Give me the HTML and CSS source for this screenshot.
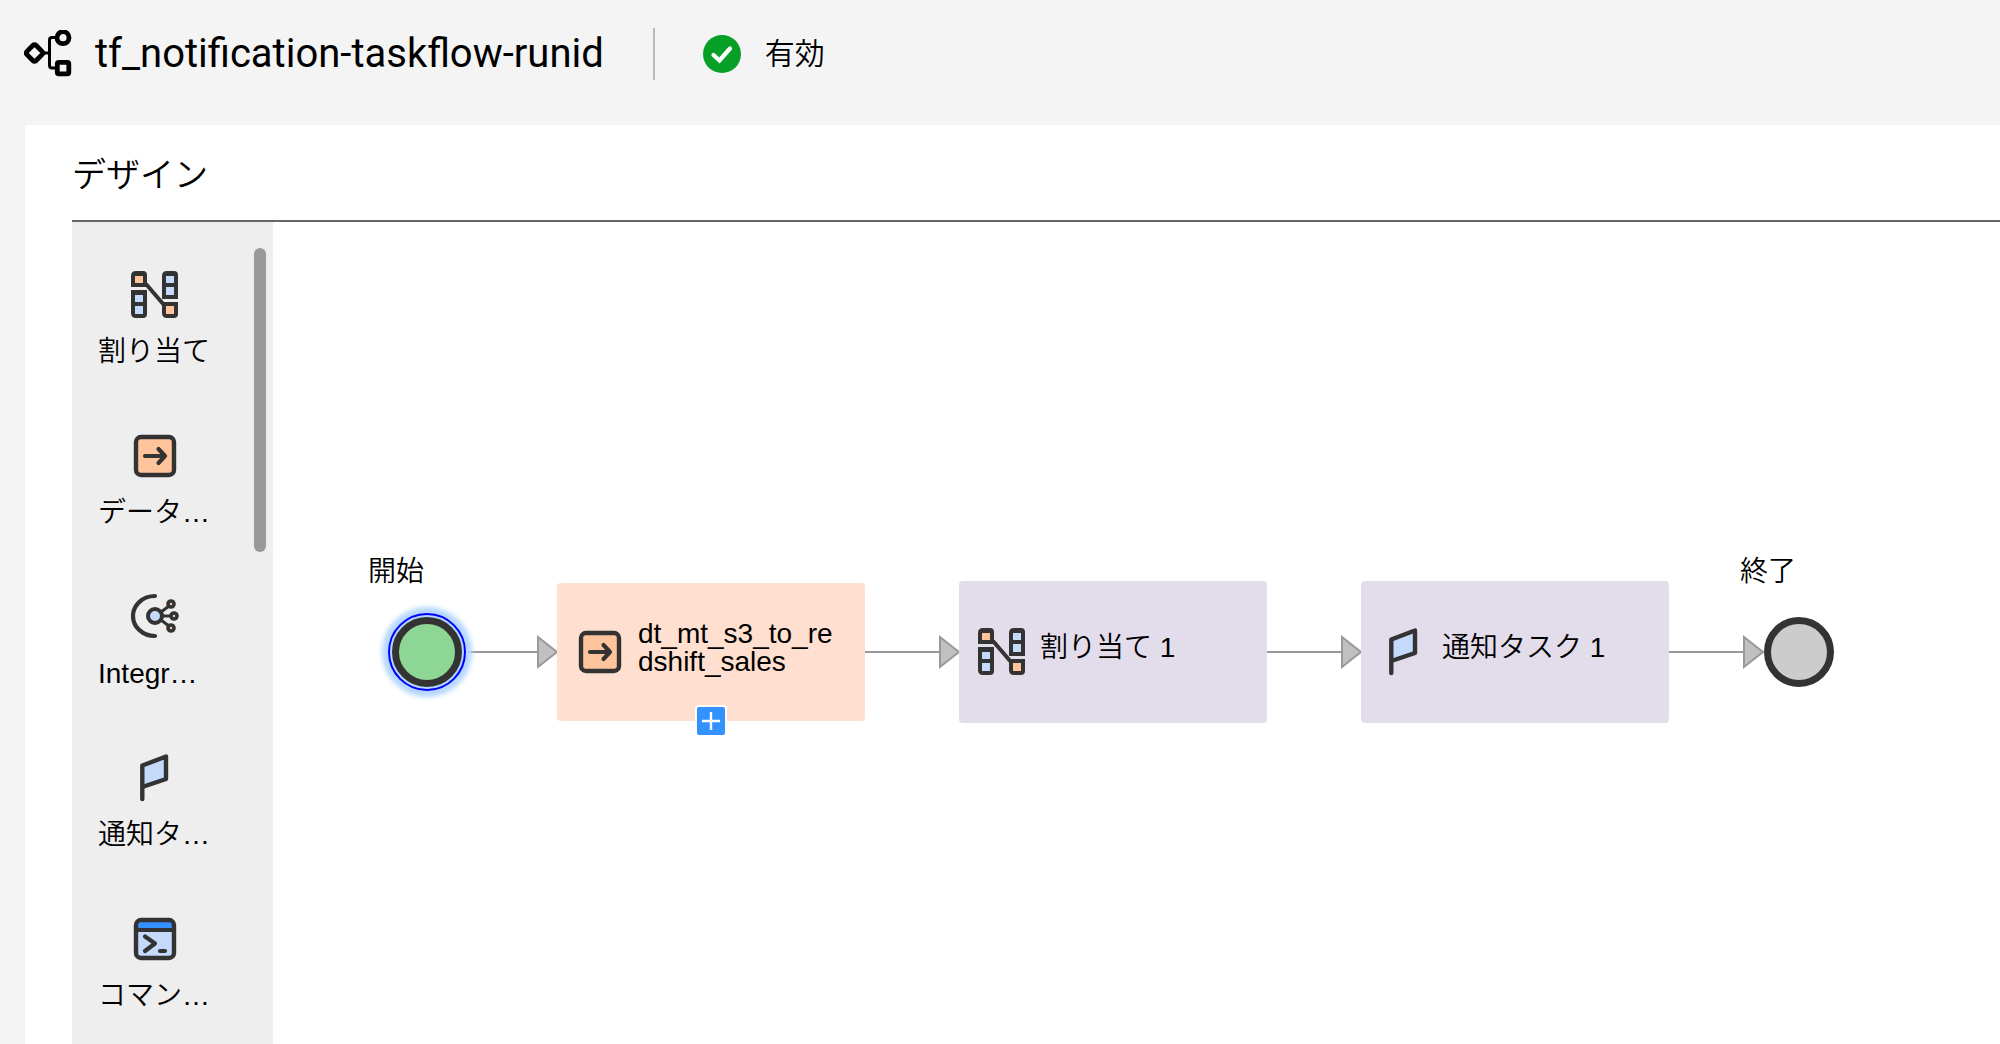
FILE: index.html
```html
<!DOCTYPE html>
<html lang="ja">
<head>
<meta charset="utf-8">
<meta name="viewport" content="width=device-width, initial-scale=1">
<title>tf_notification-taskflow-runid</title>
<link rel="stylesheet" href="styles.css">
</head>
<body>
<svg class="sprite" aria-hidden="true">
  <symbol id="icon-assign" viewBox="0 0 48 48">
    <path d="M15 13L33 34" stroke="#333" stroke-width="4"/>
    <path d="M5 0H12Q16 0 16 4V16H0V5Q0 0 5 0ZM0 19H16V43Q16 47 12 47H5Q0 47 0 42ZM36 0H43Q47 0 47 4V28H31V5Q31 0 36 0ZM31 31H47V43Q47 47 43 47H36Q31 47 31 42Z" fill="#333"/>
    <path d="M4 5H12V12H4ZM35 35H43V43H35Z" fill="#ffc49c"/>
    <path d="M4 24H12V31H4ZM4 35H12V43H4ZM35 5H43V12H35ZM35 16H43V24H35Z" fill="#c5dafb"/>
  </symbol>
  <symbol id="icon-data" viewBox="0 0 48 48">
    <rect x="5" y="5" width="38" height="38" rx="5" fill="#ffc49c" stroke="#333" stroke-width="4.4"/>
    <path d="M14 24H34M27.500 17L34 24L27.500 31" fill="none" stroke="#333" stroke-width="4.200" stroke-linecap="round" stroke-linejoin="round"/>
  </symbol>
  <symbol id="icon-integration" viewBox="0 0 48 48">
    <g fill="none" stroke="#333" stroke-linecap="round">
      <path d="M24 3A22 20 0 0 0 24 43" stroke-width="4.200"/>
      <path d="M30 19L38 13M31 23H40M30 27L38 33" stroke-width="3"/>
      <circle cx="24" cy="23" r="7" fill="#c5dafb" stroke-width="4"/>
      <g fill="#ffc49c" stroke-width="3.600">
        <circle cx="40" cy="11" r="3"/>
        <circle cx="43" cy="23" r="3"/>
        <circle cx="40" cy="35" r="3"/>
      </g>
    </g>
  </symbol>
  <symbol id="icon-flag" viewBox="0 0 48 48">
    <path d="M11.300 45V11.500L35 2.500V25L11.300 33" fill="#c5dafb" stroke="#333" stroke-width="4.400" stroke-linecap="round" stroke-linejoin="round"/>
  </symbol>
  <symbol id="icon-command" viewBox="0 0 48 48">
    <rect x="5" y="5" width="38" height="38" rx="5" fill="#c5dafb"/>
    <path d="M5 15V10Q5 5 10 5H38Q43 5 43 10V15Z" fill="#3392ff"/>
    <path d="M5 15H43" stroke="#333" stroke-width="4"/>
    <rect x="5" y="5" width="38" height="38" rx="5" fill="none" stroke="#333" stroke-width="4.400"/>
    <path d="M14 21.500L24 28.500L14 36M29 36H34" fill="none" stroke="#333" stroke-width="4.200" stroke-linecap="round" stroke-linejoin="round"/>
  </symbol>
</svg>

<header class="topbar">
  <svg class="icon" viewBox="0 0 48 48" aria-hidden="true" fill="none" stroke="#000">
    <rect x="4" y="16.500" width="13" height="13" rx="2" transform="rotate(45 10.500 23)" stroke-width="4.800"/>
    <path d="M19 23H26M33 7.500H28Q25.500 7.500 25.500 10V35Q25.500 38 28 38H33" stroke-width="3"/>
    <circle cx="39" cy="7.700" r="6" stroke-width="4.800"/>
    <rect x="33.300" y="32.300" width="11.500" height="11.500" rx="1.500" stroke-width="4.800"/>
  </svg>
  <h1 class="topbar-title">tf_notification-taskflow-runid</h1>
  <div class="status">
    <svg class="status-icon" viewBox="0 0 38 38" aria-hidden="true">
      <circle cx="19" cy="19" r="19" fill="#089f27"/>
      <path d="M10.500 20L16.500 25.500L27 13.500" fill="none" stroke="#fff" stroke-width="4.200" stroke-linecap="round" stroke-linejoin="miter"/>
    </svg>
    <span class="status-text">有効</span>
  </div>
</header>

<main class="panel">
  <h2 class="panel-title">デザイン</h2>
  <div class="designer">
    <aside class="palette">
      <div class="palette-list">
        <button type="button" class="tool"><svg class="icon" aria-hidden="true"><use href="#icon-assign"/></svg><span class="tool-label">割り当て</span></button>
        <button type="button" class="tool"><svg class="icon" aria-hidden="true"><use href="#icon-data"/></svg><span class="tool-label">データ…</span></button>
        <button type="button" class="tool"><svg class="icon" aria-hidden="true"><use href="#icon-integration"/></svg><span class="tool-label">Integr…</span></button>
        <button type="button" class="tool"><svg class="icon" aria-hidden="true"><use href="#icon-flag"/></svg><span class="tool-label">通知タ…</span></button>
        <button type="button" class="tool"><svg class="icon" aria-hidden="true"><use href="#icon-command"/></svg><span class="tool-label">コマン…</span></button>
      </div>
      <div class="scroll-thumb"></div>
    </aside>

    <section class="canvas">
      <svg class="links" aria-hidden="true">
        <g stroke="#999" stroke-width="2">
          <path d="M192 430H265M592 430H667M994 430H1069M1396 430H1471"/>
          <path d="M265 415L284 430L265 445ZM667 415L686 430L667 445ZM1069 415L1088 430L1069 445ZM1471 415L1490 430L1471 445Z" fill="#c0c0c0"/>
        </g>
      </svg>

      <span class="event-label start-label">開始</span>
      <div class="event start"></div>

      <div class="node data-node">
        <svg class="icon" aria-hidden="true"><use href="#icon-data"/></svg>
        <span class="node-label">dt_mt_s3_to_re<br>dshift_sales</span>
        <button type="button" class="add" aria-label="追加">
          <svg class="add-icon" viewBox="0 0 28 28" aria-hidden="true"><path d="M14 5V23M5 14H23" stroke="#fff" stroke-width="2.400"/></svg>
        </button>
      </div>

      <div class="node assign-node">
        <svg class="icon" aria-hidden="true"><use href="#icon-assign"/></svg>
        <span class="node-label">割り当て 1</span>
      </div>

      <div class="node notify-node">
        <svg class="icon" aria-hidden="true"><use href="#icon-flag"/></svg>
        <span class="node-label">通知タスク 1</span>
      </div>

      <span class="event-label end-label">終了</span>
      <div class="event end"></div>
    </section>
  </div>
</main>
</body>
</html>
```
FILE: styles.css
```css
* {
  box-sizing: border-box;
}

body {
  display: flex;
  flex-direction: column;
  height: 100vh;
  margin: 0;
  overflow: hidden;
  background: #f4f4f4;
  color: #000;
  font-family: "Liberation Sans", "Noto Sans CJK JP", sans-serif;
  font-size: 28px;
  font-weight: 350;
}

button {
  padding: 0;
  border: 0;
  background: none;
  color: inherit;
  font: inherit;
}

.sprite {
  position: absolute;
  width: 0;
  height: 0;
}

.icon {
  flex: none;
  width: 48px;
  height: 48px;
}

/* Top bar */
.topbar {
  display: flex;
  align-items: center;
  padding: 28px 24px 45px;
}

.topbar-title {
  margin: 0 49px 0 23px;
  font: 400 40px/52px Roboto, sans-serif;
}

.status {
  display: flex;
  align-items: center;
  gap: 24px;
  height: 52px;
  padding-left: 48px;
  border-left: 2px solid #bbb;
}

.status-icon {
  width: 38px;
  height: 38px;
}

.status-text {
  font-size: 30px;
  line-height: 52px;
}

/* Design panel */
.panel {
  display: flex;
  flex: 1;
  flex-direction: column;
  min-height: 0;
  margin-left: 25px;
  padding-left: 47px;
  background: #fff;
}

.panel-title {
  margin: 0;
  padding-top: 5px;
  border-bottom: 2px solid #666;
  font-size: 34px;
  font-weight: 350;
  line-height: 90px;
}

.designer {
  display: flex;
  flex: 1;
  min-height: 0;
}

/* Tool palette */
.palette {
  display: flex;
  flex: none;
  justify-content: space-between;
  width: 201px;
  padding: 0 7px 0 26px;
  overflow: hidden;
  background: #eee;
}

.palette-list {
  display: flex;
  flex-direction: column;
  gap: 62px;
  padding-top: 49px;
}

.tool {
  display: flex;
  flex: none;
  flex-direction: column;
  align-items: center;
  gap: 15px;
  width: 114px;
}

.tool-label {
  align-self: flex-start;
  line-height: 36px;
}

.scroll-thumb {
  width: 12px;
  height: 304px;
  margin-top: 26px;
  border-radius: 6px;
  background: #999;
}

/* Flow canvas */
.canvas {
  position: relative;
  flex: 1;
  overflow: hidden;
}

.links {
  position: absolute;
  inset: 0;
  width: 100%;
  height: 100%;
}

.event {
  position: absolute;
  top: 395px;
  width: 70px;
  height: 70px;
  border: 7px solid #333;
  border-radius: 50%;
}

.start {
  left: 119px;
  outline: 2px solid #00f;
  outline-offset: 2px;
  background: #8ed696;
  box-shadow: 0 0 5px 10px #b3d7ff;
}

.end {
  left: 1491px;
  background: #ccc;
}

.event-label {
  position: absolute;
  top: 332px;
  line-height: 36px;
}

.start-label {
  left: 95px;
}

.end-label {
  left: 1467px;
}

.node {
  position: absolute;
  display: flex;
  align-items: center;
  gap: 14px;
  width: 308px;
  padding-left: 19px;
  border-radius: 4px;
}

.node-label {
  padding-bottom: 9px;
  line-height: 28px;
}

.data-node {
  top: 361px;
  left: 284px;
  height: 138px;
  background: #ffdfcf;
}

.assign-node,
.notify-node {
  top: 359px;
  height: 142px;
  background: #e3dcea;
}

.assign-node {
  left: 686px;
}

.notify-node {
  left: 1088px;
}

.add {
  position: absolute;
  bottom: -16px;
  left: 138px;
  width: 32px;
  height: 32px;
  border: 2px solid #fff;
  border-radius: 4px;
  background: #3392ff;
}

.add-icon {
  display: block;
  width: 28px;
  height: 28px;
}
```
